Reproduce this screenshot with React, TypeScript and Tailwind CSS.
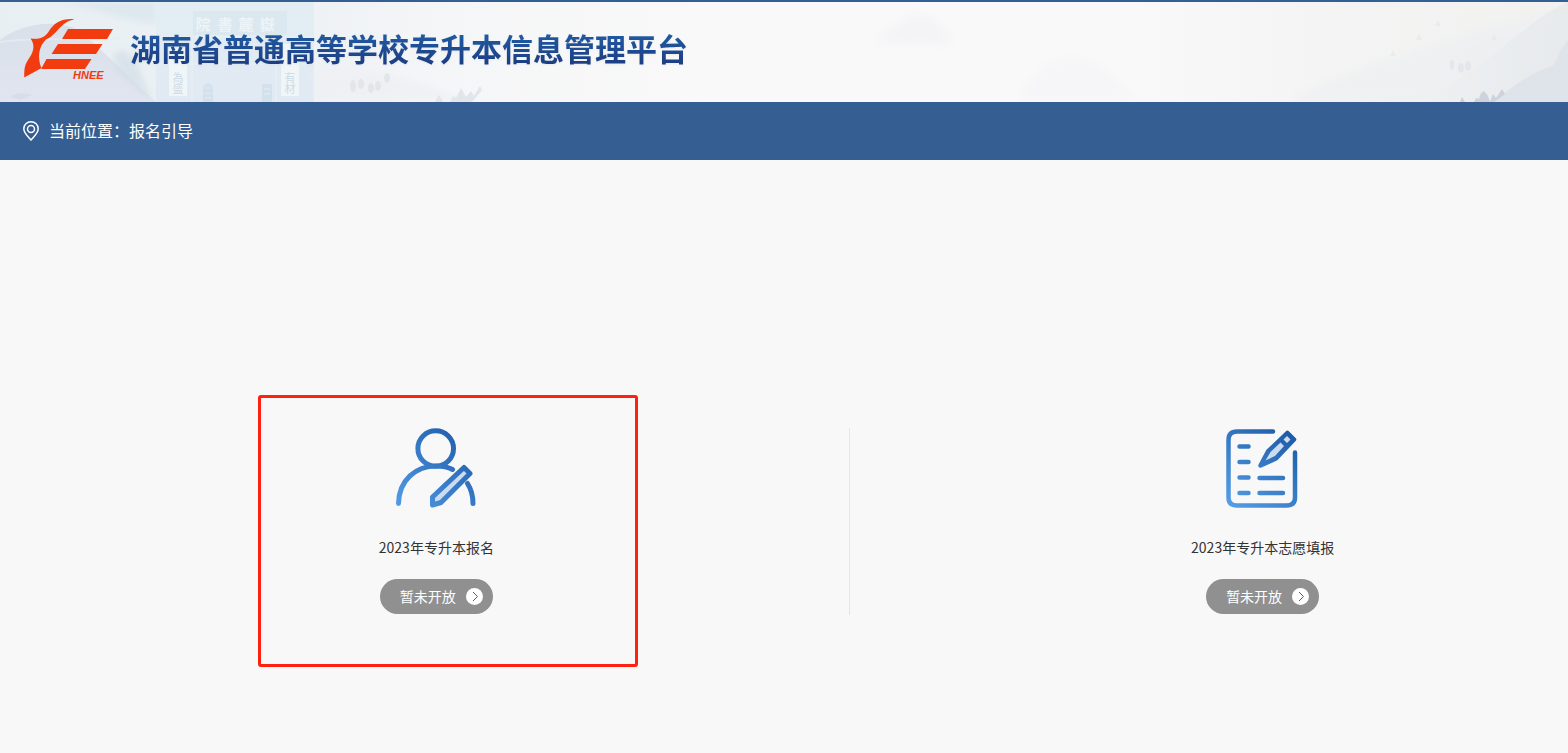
import type { ReactNode } from "react";

const FONT = "font-['Noto_Sans_CJK_SC',sans-serif]";

function Logo() {
    return (
        <svg className="w-[90px] h-16 shrink-0" viewBox="0 -3 90 64" role="img" aria-label="HNEE">
            <g fill="#f23c10">
                <path d="M50.500 0.200C42 -1 33 2 29 7C24 12 24 16 18 18.500C15 20 11 20 6.500 19.500C12 27 9 34 4 41C0 47 0.300 52 0.300 58.500L17.500 49C14.500 42 13 29 22 20.500C33 16 36 3 50.500 0.200Z" />
                <path d="M44 10H89L83 20H38Z" />
                <path d="M34 25H78.500L72 35H27.500Z" />
                <path d="M22.500 40H67.500L61 50H17Z" />
            </g>
            <text x="49" y="60" fill="#f23c10" fontSize="11" fontWeight="700" fontStyle="italic" fontFamily="Liberation Sans, sans-serif">HNEE</text>
        </svg>
    );
}

function BannerLeft() {
    return (
        <svg className="absolute left-0 top-0 w-[700px] h-[100px]" viewBox="0 0 700 100" aria-hidden="true">
            <defs>
                <linearGradient id="sky" x1="0" x2="1" y1="0" y2="0">
                    <stop offset="0" stopColor="#e7eff2" />
                    <stop offset="0.4" stopColor="#edf1f5" />
                    <stop offset="0.65" stopColor="#f5f6f7" />
                    <stop offset="1" stopColor="#f9f9f9" />
                </linearGradient>
                <linearGradient id="hill" x1="0" x2="0" y1="0" y2="1">
                    <stop offset="0" stopColor="#d8e0ea" />
                    <stop offset="1" stopColor="#e2e5ef" />
                </linearGradient>
                <linearGradient id="gate" x1="0" x2="0" y1="0" y2="1">
                    <stop offset="0" stopColor="#e3eef3" />
                    <stop offset="1" stopColor="#e1e9f3" />
                </linearGradient>
                <filter id="soft"><feGaussianBlur stdDeviation="3" /></filter>
            </defs>
            <rect width="700" height="100" fill="url(#sky)" />
            <path d="M60 0C90 6 110 14 156 22V0Z" fill="#dde8ef" filter="url(#soft)" />
            <path d="M0 38C20 22 60 14 84 32L156 100H0Z" fill="url(#hill)" />
            <path d="M112 54L122 48L134 56L152 100L118 70Z" fill="#cfdae5" opacity="0.6" filter="url(#soft)" />
            <path d="M0 40C40 34 70 40 120 36" fill="none" stroke="#e6edf2" strokeWidth="2" opacity="0.7" />
            <rect x="156" y="0" width="158" height="100" fill="url(#gate)" />
            <rect x="193" y="9" width="94" height="24" fill="#dbe8ef" />
            <path d="M156 35H314M156 62H314M192 36V100M276 36V100" stroke="#eaf1f5" strokeWidth="1" />
            <rect x="169" y="42" width="18" height="52" fill="#f0f5f8" />
            <rect x="281" y="42" width="18" height="52" fill="#f0f5f8" />
            <path d="M203 100V86Q208 76 213 86V100ZM262 82H272V100H262Z" fill="#d0deea" opacity="0.8" />
            <path d="M205 86H211M205 91H211M205 96H211M264 87H270M264 92H270" stroke="#e4edf3" strokeWidth="1" />
            <g fontFamily="Noto Sans CJK TC, sans-serif" textAnchor="middle">
                <g fontSize="15" fill="#edf4f7" fontWeight="700">
                    <text x="203" y="28">院</text>
                    <text x="225" y="28">書</text>
                    <text x="246" y="28">麓</text>
                    <text x="267" y="28">嶽</text>
                </g>
                <g fontSize="11" fill="#cddce8">
                    <text x="178" y="80">為</text>
                    <text x="178" y="91">盛</text>
                    <text x="290" y="80">有</text>
                    <text x="290" y="91">材</text>
                </g>
            </g>
            <path d="M314 68C370 60 400 72 470 100H314Z" fill="#eeeff3" opacity="0.6" filter="url(#soft)" />
            <g fill="#e2e5ea">
                <ellipse cx="353" cy="84" rx="3" ry="6" />
                <ellipse cx="361" cy="82" rx="3" ry="5" />
                <ellipse cx="371" cy="86" rx="3" ry="5" />
                <ellipse cx="378" cy="84" rx="3" ry="5" />
                <ellipse cx="387" cy="76" rx="3" ry="5" />
                <path d="M435 100L439 93L443 100ZM450 100L453 94L456 96L461 86L466 95L471 89L474 94L480 84L482 88L472 100Z" />
            </g>
            <path d="M10 95Q20 88 32 93L20 98Z" fill="#d2d9e4" opacity="0.6" />
        </svg>
    );
}

function BannerRight() {
    return (
        <svg className="absolute right-0 top-0 w-[700px] h-[100px]" viewBox="0 0 700 100" aria-hidden="true">
            <defs>
                <linearGradient id="mist" x1="0" x2="1" y1="0" y2="0">
                    <stop offset="0" stopColor="#f9f9f9" />
                    <stop offset="0.38" stopColor="#f9f9f9" />
                    <stop offset="0.65" stopColor="#f4f4f4" />
                    <stop offset="1" stopColor="#f1f1f0" />
                </linearGradient>
                <linearGradient id="slope" x1="0" x2="1" y1="0" y2="0">
                    <stop offset="0" stopColor="#edeff1" />
                    <stop offset="1" stopColor="#e2e7ea" />
                </linearGradient>
                <filter id="haze" x="-20%" y="-30%" width="140%" height="160%"><feGaussianBlur stdDeviation="5" /></filter>
            </defs>
            <rect width="700" height="100" fill="url(#mist)" />
            <path d="M6 42C14 28 30 24 40 14C60 6 76 20 84 42Z" fill="#f4f4f7" filter="url(#haze)" />
            <path d="M150 98C170 60 190 50 230 60L270 98Z" fill="#f6f6f8" filter="url(#haze)" />
            <path d="M420 100C490 60 560 50 600 30L700 10V100Z" fill="#edeff1" opacity="0.7" filter="url(#haze)" />
            <path d="M700 0C672 12 664 24 645 36C620 60 590 74 560 100H700Z" fill="url(#slope)" opacity="0.6" />
            <path d="M700 38C690 50 688 62 684 64C662 72 650 80 626 100H700Z" fill="#dfe3ea" />
            <g fill="#e3e6ea">
                <ellipse cx="584" cy="63" rx="2" ry="5" />
                <ellipse cx="593" cy="66" rx="3" ry="5" />
                <ellipse cx="600" cy="64" rx="3" ry="5" />
                <path d="M548 38L551 32L554 38ZM522 54L525 48L528 54ZM567 24L570 18L573 24ZM623 38L626 32L629 38Z" opacity="0.6" />
            </g>
            <path d="M592 100L594 95L597 100ZM606 100L608 96L611 97L613 91L616 89L620 94L622 100L625 92L628 96L634 87L637 92L626 100Z" fill="#cdd2db" />
        </svg>
    );
}

function UserPenIcon() {
    return (
        <svg className="size-20" viewBox="0 0 80 80" fill="none" strokeLinecap="round" strokeLinejoin="round" aria-hidden="true">
            <defs>
                <linearGradient id="userBlue" gradientUnits="userSpaceOnUse" x1="0" y1="72" x2="60" y2="10">
                    <stop offset="0" stopColor="#5099e2" />
                    <stop offset="1" stopColor="#2463b0" />
                </linearGradient>
            </defs>
            <g stroke="url(#userBlue)" strokeWidth="5">
                <circle cx="39.700" cy="20.500" r="17.800" />
                <path d="M2.500 75.500C3 52 20 38 40 38C46 38 52 39 56.500 41.500" />
                <path d="M71.500 55.500C75 61 77 68 77 75.500" />
                <path d="M68 39.500L74 45.500L45 74.500L36.500 77L36.500 69Z" fill="#cbdcf0" />
            </g>
        </svg>
    );
}

function FormPenIcon() {
    return (
        <svg className="size-20" viewBox="0 0 80 80" fill="none" strokeLinecap="round" strokeLinejoin="round" aria-hidden="true">
            <defs>
                <linearGradient id="formBlue" gradientUnits="userSpaceOnUse" x1="5" y1="78" x2="65" y2="5">
                    <stop offset="0" stopColor="#559fe8" />
                    <stop offset="1" stopColor="#1f5ca8" />
                </linearGradient>
            </defs>
            <g stroke="url(#formBlue)" strokeWidth="4.500">
                <path d="M50 3.500H14C8.500 3.500 5.500 6.500 5.500 12V69.500C5.500 75 8.500 77.500 14 77.500H63.500C69 77.500 72 75 72 69.500V24.500" />
                <path d="M16.500 18.500H25.500M16.500 34H25.500M16.500 49.500H25.500M16.500 65H25.500M36.500 50H60M36.500 65H60" />
                <path d="M64.500 5L71 11.500L53 30.500L37.500 37.500L45 23.500Z" fill="url(#formBlue)" />
            </g>
            <path d="M64 8L67.500 11.500L64 15L60.500 11.500ZM57.500 14.500L61 18L52 28L42.500 32.500L47.500 24Z" fill="#cbdcf0" />
        </svg>
    );
}

function EntryCard({ title, icon, marked }: { title: string; icon: ReactNode; marked?: boolean }) {
    return (
        <section className="flex justify-center">
            <div className="relative flex flex-col items-center">
                {marked && (
                    <div className="absolute -top-[33px] -left-[121px] w-[380px] h-[272px] rounded-[3px] border-3 border-[#ff2012] pointer-events-none"></div>
                )}
                {icon}
                <h2 className="mt-[29px] text-sm leading-5 text-[#333333] whitespace-nowrap">{title}</h2>
                <button type="button" className="mt-[22px] flex h-[35px] items-center gap-2.5 rounded-full bg-[#909090] pl-5 pr-2.5 text-sm text-white">
                    <span className="pb-0.5">暂未开放</span>
                    <svg className="size-[17px]" viewBox="0 0 17 17" aria-hidden="true">
                        <circle cx="8.500" cy="8.500" r="8.500" fill="#fff" />
                        <path d="M7 4L11.500 8.500L7 13" fill="none" stroke="#4f5f78" strokeWidth="1" />
                    </svg>
                </button>
            </div>
        </section>
    );
}

export default function App() {
    return (
        <div className={`flex min-h-screen flex-col bg-[#f8f8f8] ${FONT}`}>
            <header className="relative flex h-[102px] items-center overflow-hidden border-t-2 border-[#355e93] bg-[#f9f9f9] pl-6">
                <BannerLeft />
                <BannerRight />
                <div className="relative flex items-center gap-4 pb-2">
                    <Logo />
                    <h1 className="bg-linear-to-b from-[#2260a8] to-[#1b3a80] bg-clip-text text-[31px] leading-10 font-bold text-transparent whitespace-nowrap drop-shadow-xs">
                        湖南省普通高等学校专升本信息管理平台
                    </h1>
                </div>
            </header>
            <nav aria-label="当前位置" className="flex h-[58px] items-center gap-2.5 bg-[#355e93] pl-[23px] text-base text-white">
                <svg className="h-5 w-4" viewBox="0 0 16 20" fill="none" stroke="#fff" strokeWidth="1.500" aria-hidden="true">
                    <path d="M8 19C4 14.500 0.800 12 0.800 7.800C0.800 3.800 4 0.800 8 0.800C12 0.800 15.200 3.800 15.200 7.800C15.200 12 12 14.500 8 19Z" />
                    <circle cx="8" cy="8" r="3.500" />
                </svg>
                <span className="pb-0.5">当前位置：报名引导</span>
            </nav>
            <main className="grid flex-1 grid-cols-[17fr_6fr_17fr] items-start pt-[268px] pb-20 pl-[131px]">
                <EntryCard title="2023年专升本报名" icon={<UserPenIcon />} marked />
                <div className="h-[187px] w-px justify-self-center bg-[#e6e6e6]"></div>
                <EntryCard title="2023年专升本志愿填报" icon={<FormPenIcon />} />
            </main>
        </div>
    );
}
